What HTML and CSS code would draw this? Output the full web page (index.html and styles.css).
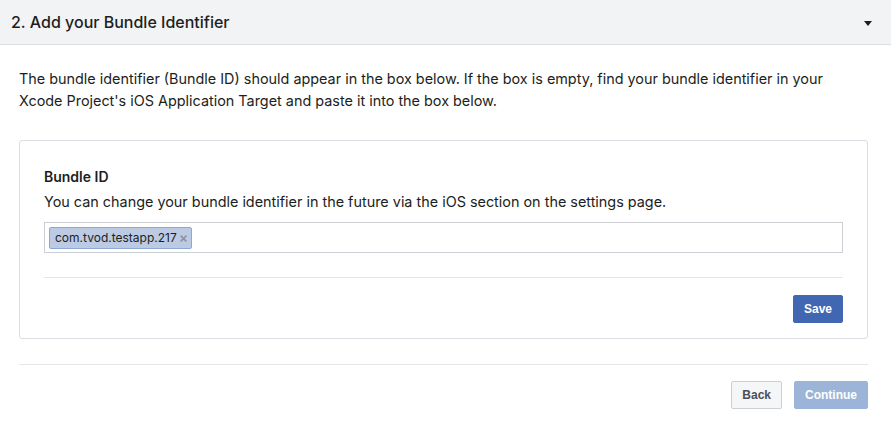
FILE: index.html
```html
<!DOCTYPE html>
<html>
<head>
<meta charset="utf-8">
<link rel="stylesheet" href="styles.css">
</head>
<body>
<div class="header">
  <span class="title">2. Add your Bundle Identifier</span>
  <span class="caret"></span>
</div>
<div class="content">
  <p class="intro">The bundle identifier (Bundle ID) should appear in the box below. If the box is empty, find your bundle identifier in your Xcode Project's iOS Application Target and paste it into the box below.</p>
  <div class="card">
    <div class="label">Bundle ID</div>
    <div class="desc">You can change your bundle identifier in the future via the iOS section on the settings page.</div>
    <div class="input">
      <span class="token">com.tvod.testapp.217<span class="x">×</span></span>
    </div>
    <div class="card-divider"></div>
    <div class="card-actions">
      <button class="btn btn-primary">Save</button>
    </div>
  </div>
  <div class="divider"></div>
  <div class="actions">
    <button class="btn btn-default">Back</button>
    <button class="btn btn-disabled">Continue</button>
  </div>
</div>
</body>
</html>
```
FILE: styles.css
```css
* { box-sizing: border-box; }
body {
  margin: 0;
  font-family: Inter, "Helvetica Neue", "Liberation Sans", Arial, sans-serif;
  color: #1c1e21;
  background: #fff;
}
.header {
  height: 45px;
  background: #f2f3f5;
  border-bottom: 1px solid #dddfe2;
  display: flex;
  align-items: center;
  justify-content: space-between;
  padding: 0 19px 0 11px;
}
.title {
  font-size: 16px;
  font-weight: 500;
  color: #1c1e21;
}
.caret {
  width: 0;
  height: 0;
  border-left: 4px solid transparent;
  border-right: 4px solid transparent;
  border-top: 5px solid #1c1e21;
  margin-top: 2px;
}
.content {
  padding: 0 23px 0 19px;
}
.intro {
  margin: 23px 0 28px;
  font-size: 14.4px;
  line-height: 22px;
  color: #1c1e21;
}
.card {
  border: 1px solid #dadde1;
  border-radius: 3px;
  padding: 27px 24px 15px;
}
.label {
  font-size: 14px;
  font-weight: 600;
  line-height: 18px;
  color: #1c1e21;
}
.desc {
  font-size: 14.4px;
  line-height: 18px;
  margin-top: 7px;
  color: #1c1e21;
}
.input {
  margin-top: 11px;
  height: 31px;
  border: 1px solid #ccd0d5;
  padding: 0 4px;
  display: flex;
  align-items: center;
}
.token {
  display: inline-flex;
  align-items: center;
  height: 22px;
  padding: 0 3px 0 5px;
  background: #bccbe3;
  border: 1px solid #8ea8d6;
  border-radius: 2px;
  font-size: 12px;
  color: #1c1e21;
}
.x {
  color: #8d949e;
  font-size: 14px;
  font-weight: 600;
  line-height: 1;
  margin-left: 2px;
}
.card-divider {
  height: 1px;
  background: #e5e6e9;
  margin-top: 24px;
}
.card-actions {
  display: flex;
  justify-content: flex-end;
  margin-top: 17px;
}
.divider {
  height: 1px;
  background: #e5e6e9;
  margin-top: 25px;
}
.actions {
  display: flex;
  justify-content: flex-end;
  gap: 12px;
  margin-top: 16px;
}
.btn {
  font-family: "Liberation Sans", Arial, sans-serif;
  font-size: 12px;
  font-weight: bold;
  height: 28px;
  padding: 0 10px;
  border-radius: 2px;
  border: 1px solid;
}
.btn-primary {
  background: #4267b2;
  border-color: #4267b2;
  color: #fff;
}
.btn-default {
  background: #f5f6f7;
  border-color: #ccd0d5;
  color: #4b4f56;
}
.btn-disabled {
  background: #9cb4d8;
  border-color: #9cb4d8;
  color: #fff;
}
```
